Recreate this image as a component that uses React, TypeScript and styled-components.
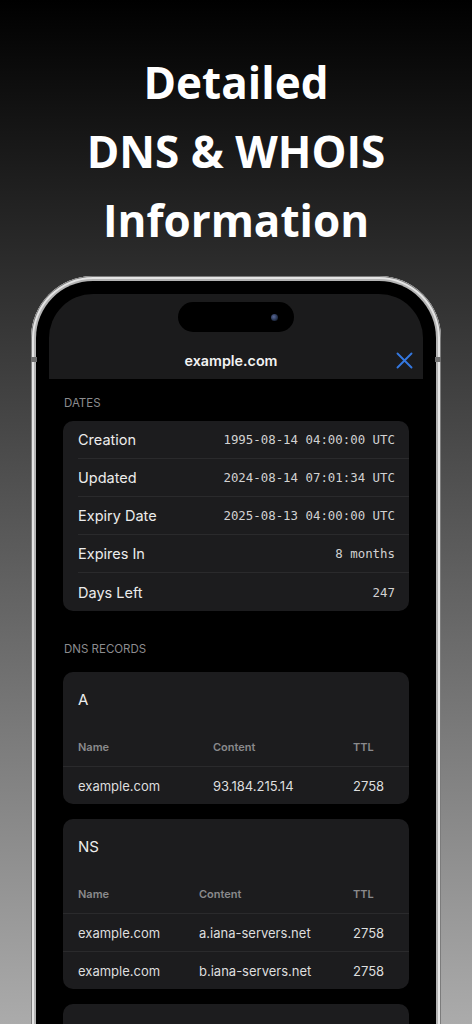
import styled, { createGlobalStyle } from 'styled-components';

const GlobalStyle = createGlobalStyle`
  html, body {
    margin: 0;
    padding: 0;
    background: #000;
  }
  * {
    box-sizing: border-box;
  }
`;

interface DateRow {
  label: string;
  value: string;
}

interface DnsRecord {
  name: string;
  content: string;
  ttl: string;
}

interface DnsGroup {
  type: string;
  columns: string;
  records: DnsRecord[];
}

const dates: DateRow[] = [
  { label: 'Creation', value: '1995-08-14 04:00:00 UTC' },
  { label: 'Updated', value: '2024-08-14 07:01:34 UTC' },
  { label: 'Expiry Date', value: '2025-08-13 04:00:00 UTC' },
  { label: 'Expires In', value: '8 months' },
  { label: 'Days Left', value: '247' },
];

const dnsGroups: DnsGroup[] = [
  {
    type: 'A',
    columns: '135px 140px 1fr',
    records: [{ name: 'example.com', content: '93.184.215.14', ttl: '2758' }],
  },
  {
    type: 'NS',
    columns: '121px 154px 1fr',
    records: [
      { name: 'example.com', content: 'a.iana-servers.net', ttl: '2758' },
      { name: 'example.com', content: 'b.iana-servers.net', ttl: '2758' },
    ],
  },
];

export default function App() {
  return (
    <>
      <GlobalStyle />
      <Page>
        <Headline>
          Detailed
          <br />
          DNS &amp; WHOIS
          <br />
          Information
        </Headline>

        <Frame>
          <AntennaBand $side="left" />
          <AntennaBand $side="right" />
          <Bezel>
            <Screen>
              <SheetHeader>
                <Island>
                  <CameraDot />
                </Island>
                <TitleRow>
                  <span />
                  <DomainTitle>example.com</DomainTitle>
                  <CloseButton aria-label="Close">
                    <svg width="17" height="17" viewBox="0 0 17 17" fill="none">
                      <path
                        d="M1.5 1.5 L15.5 15.5 M15.5 1.5 L1.5 15.5"
                        stroke="#3478e0"
                        strokeWidth="1.9"
                        strokeLinecap="round"
                      />
                    </svg>
                  </CloseButton>
                </TitleRow>
              </SheetHeader>

              <Content>
                <SectionLabel $top={17} $bottom={11}>
                  Dates
                </SectionLabel>
                <Card>
                  {dates.map((row) => (
                    <DateItem key={row.label}>
                      <DateLabel>{row.label}</DateLabel>
                      <DateValue>{row.value}</DateValue>
                    </DateItem>
                  ))}
                </Card>

                <SectionLabel $top={31} $bottom={16}>
                  DNS Records
                </SectionLabel>
                <CardStack>
                  {dnsGroups.map((group) => (
                    <Card key={group.type}>
                      <RecordType>{group.type}</RecordType>
                      <TableRow $columns={group.columns} $head>
                        <span>Name</span>
                        <span>Content</span>
                        <span>TTL</span>
                      </TableRow>
                      {group.records.map((rec) => (
                        <TableRow key={rec.content} $columns={group.columns}>
                          <span>{rec.name}</span>
                          <span>{rec.content}</span>
                          <span>{rec.ttl}</span>
                        </TableRow>
                      ))}
                    </Card>
                  ))}
                  {/* next record card, only its top edge is on screen */}
                  <Card $minHeight={120} />
                </CardStack>
              </Content>
            </Screen>
          </Bezel>
        </Frame>
      </Page>
    </>
  );
}

const Page = styled.div`
  height: 1024px;
  overflow: hidden;
  display: flex;
  flex-direction: column;
  align-items: center;
  padding-top: 48px;
  background: linear-gradient(180deg, #000000 0%, #2e2e2e 27%, #ababab 100%);
`;

const Headline = styled.h1`
  margin: 0;
  color: #ffffff;
  font-family: 'Open Sans', 'Liberation Sans', sans-serif;
  font-size: 44px;
  line-height: 69px;
  font-weight: 700;
  text-align: center;
  letter-spacing: 0;
`;

const Frame = styled.div`
  position: relative;
  flex-shrink: 0;
  width: 410px;
  height: 900px;
  margin-top: 21px;
  padding: 5px;
  border-radius: 62px;
  background: #b4b4b4;
  box-shadow:
    inset 0 0 0 1px #7c7c7c,
    inset 0 0 0 3px #e4e4e4;
`;

const AntennaBand = styled.span<{ $side: 'left' | 'right' }>`
  position: absolute;
  top: 81px;
  ${(p) => (p.$side === 'left' ? 'left: 0;' : 'right: 0;')}
  width: 6px;
  height: 5px;
  background: #6d6d6d;
`;

const Bezel = styled.div`
  height: 100%;
  padding: 13px;
  border-radius: 57px;
  background: #000;
`;

const Screen = styled.div`
  height: 100%;
  overflow: hidden;
  border-radius: 44px;
  background: #000;
  font-family: 'Inter', 'Liberation Sans', sans-serif;
`;

const SheetHeader = styled.header`
  display: flex;
  flex-direction: column;
  align-items: center;
  padding-top: 8px;
  background: #1b1b1c;
`;

const Island = styled.div`
  width: 116px;
  height: 30px;
  display: flex;
  align-items: center;
  justify-content: flex-end;
  padding-right: 16px;
  border-radius: 15px;
  background: #000;
`;

const CameraDot = styled.span`
  width: 7px;
  height: 7px;
  border-radius: 50%;
  background: radial-gradient(circle at 40% 40%, #5a6a9a 0%, #24304a 60%, #0a0d14 100%);
`;

const TitleRow = styled.div`
  width: 100%;
  height: 38px;
  margin-top: 9px;
  display: grid;
  grid-template-columns: 1fr auto 1fr;
  align-items: center;
  padding-right: 10px;
`;

const DomainTitle = styled.span`
  color: #f2f2f2;
  font-size: 14.3px;
  font-weight: 600;
`;

const CloseButton = styled.button`
  justify-self: end;
  display: flex;
  padding: 0;
  border: 0;
  background: transparent;
`;

const Content = styled.div`
  padding: 0 14px;
`;

const SectionLabel = styled.div<{ $top: number; $bottom: number }>`
  margin: ${(p) => p.$top}px 0 ${(p) => p.$bottom}px 1px;
  color: #8c8c8f;
  font-size: 11.5px;
  line-height: 14px;
  text-transform: uppercase;
`;

const CardStack = styled.div`
  display: flex;
  flex-direction: column;
  gap: 15px;
`;

const Card = styled.div<{ $minHeight?: number }>`
  min-height: ${(p) => p.$minHeight ?? 0}px;
  border-radius: 10px;
  background: #1c1c1e;
  overflow: hidden;
`;

const DateItem = styled.div`
  height: 38px;
  margin-left: 15px;
  padding-right: 14px;
  display: flex;
  align-items: center;
  justify-content: space-between;
  border-bottom: 1px solid #2a2a2c;

  &:last-child {
    border-bottom: 0;
  }
`;

const DateLabel = styled.span`
  color: #ececec;
  font-size: 14.5px;
`;

const DateValue = styled.span`
  color: #d2d2d2;
  font-family: 'DejaVu Sans Mono', 'Liberation Mono', monospace;
  font-size: 12.4px;
`;

const RecordType = styled.div`
  padding: 18px 15px 17px;
  color: #ececec;
  font-size: 15px;
  line-height: 20px;
`;

const TableRow = styled.div<{ $columns: string; $head?: boolean }>`
  height: ${(p) => (p.$head ? 39 : 38)}px;
  display: grid;
  grid-template-columns: ${(p) => p.$columns};
  align-items: center;
  padding-left: 15px;
  border-top: ${(p) => (p.$head ? '0' : '1px solid #2a2a2c')};
  color: ${(p) => (p.$head ? '#8a8a8c' : '#dedede')};
  font-size: ${(p) => (p.$head ? 11 : 13)}px;
  font-weight: ${(p) => (p.$head ? 600 : 400)};
`;
